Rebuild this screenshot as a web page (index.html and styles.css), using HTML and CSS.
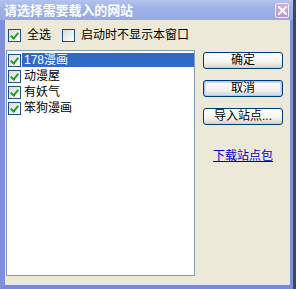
FILE: index.html
```html
<!DOCTYPE html>
<html>
<head>
<meta charset="utf-8">
<link rel="stylesheet" href="styles.css">
</head>
<body>
<div class="window">
  <div class="titlebar">
    <span class="title">请选择需要载入的网站</span>
    <span class="close"><svg width="9" height="9" viewBox="0 0 9 9"><path d="M1 1 L8 8 M8 1 L1 8" stroke="#fff" stroke-width="2" stroke-linecap="square"/></svg></span>
  </div>
  <div class="client">
    <div class="toprow">
      <label class="chk"><span class="box on"></span><span>全选</span></label>
      <label class="chk"><span class="box"></span><span>启动时不显示本窗口</span></label>
    </div>
    <div class="main">
      <div class="list">
        <div class="item"><span class="box on"></span><span class="txt sel">178漫画</span></div>
        <div class="item"><span class="box on"></span><span class="txt">动漫屋</span></div>
        <div class="item"><span class="box on"></span><span class="txt">有妖气</span></div>
        <div class="item"><span class="box on"></span><span class="txt">笨狗漫画</span></div>
      </div>
      <div class="side">
        <button class="btn">确定</button>
        <button class="btn def">取消</button>
        <button class="btn">导入站点...</button>
        <a class="link" href="#">下载站点包</a>
      </div>
    </div>
  </div>
</div>
</body>
</html>
```

FILE: styles.css
```css
html, body { margin: 0; padding: 0; }
body {
  background: #4a4450;
  width: 296px;
  height: 289px;
  overflow: hidden;
  font-family: "Liberation Sans", "Noto Sans CJK SC", sans-serif;
  font-size: 12px;
  color: #000;
}
.window {
  width: 293px;
  height: 289px;
  box-sizing: border-box;
  background: #8595de;
  border-left: 5px solid #7f8fdc;
  border-right: 3px solid #7f8fdc;
  border-bottom: 4px solid #7a8ad8;
  display: flex;
  flex-direction: column;
}
.titlebar {
  height: 20px;
  margin-left: -5px;
  margin-right: -3px;
  background: linear-gradient(to bottom, #b4c3ee 0%, #9fb2e8 40%, #95a9e4 100%);
  display: flex;
  align-items: center;
  justify-content: space-between;
  padding: 0 4px 0 4px;
}
.title {
  color: #fff;
  font-weight: bold;
  font-size: 13px;
  font-family: "Noto Sans CJK SC", sans-serif;
  line-height: 20px;
  letter-spacing: -0.1px;
}
.close {
  width: 12px;
  height: 13px;
  margin-top: 1px;
  border: 1px solid #f2ecf8;
  border-radius: 2px;
  background: linear-gradient(#d6a9d6, #c095cc);
  display: flex;
  align-items: center;
  justify-content: center;
}
.client {
  flex: 1;
  background: #ece9d8;
  border-bottom: 1px solid #dfe3f6;
  padding: 8px 7px 8px 1px;
  display: flex;
  flex-direction: column;
}
.toprow {
  display: flex;
  gap: 11px;
  padding-left: 2px;
  height: 14px;
  align-items: center;
}
.chk { display: flex; align-items: center; gap: 6px; line-height: 14px; }
.box {
  width: 11px;
  height: 11px;
  border: 1px solid #1c5180;
  background: linear-gradient(135deg, #dcdcd5, #fff);
  display: inline-block;
  position: relative;
  flex: none;
}
.box.on::after {
  content: "";
  position: absolute;
  left: 3px;
  top: 1px;
  width: 3px;
  height: 6px;
  border-right: 2px solid #21a121;
  border-bottom: 2px solid #21a121;
  transform: rotate(40deg);
}
.main {
  flex: 1;
  display: flex;
  gap: 8px;
  margin-top: 8px;
}
.list {
  width: 189px;
  box-sizing: border-box;
  background: #fff;
  border: 1px solid #7f9db9;
  padding-top: 1px;
}
.item {
  display: flex;
  align-items: center;
  height: 16px;
  padding-left: 1px;
}
.item .box { margin-right: 1px; }
.txt {
  flex: 1;
  line-height: 14px;
  padding-left: 2px;
}
.sel {
  background: #316ac5;
  color: #fff;
}
.side {
  width: 80px;
  display: flex;
  flex-direction: column;
  padding-top: 2px;
}
.btn {
  height: 17px;
  margin-bottom: 11px;
  border: 1px solid #003c74;
  border-radius: 3px;
  background: linear-gradient(#fff 0%, #f4f3ee 60%, #d6d0c5 100%);
  font-family: "Liberation Sans", "Noto Sans CJK SC", sans-serif;
  font-size: 12px;
  padding: 0;
  color: #000;
  line-height: 15px;
}
.btn.def {
  box-shadow: inset 0 0 0 1px #adc4f0, inset 0 0 0 2px #cedcf8;
}
.link {
  margin-top: 13px;
  text-align: center;
  color: #0000cc;
  text-decoration: underline;
  line-height: 14px;
}
```
